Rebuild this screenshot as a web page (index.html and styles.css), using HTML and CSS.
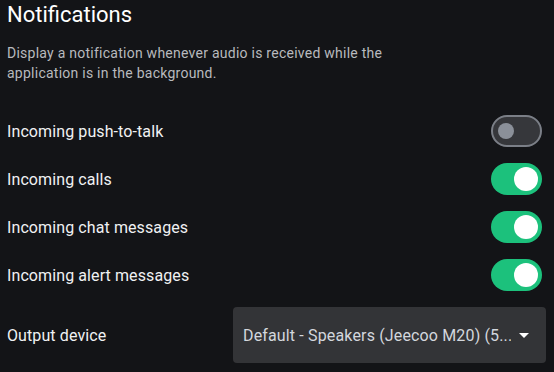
FILE: index.html
```html
<!DOCTYPE html>
<html>
<head>
<meta charset="utf-8">
<link rel="stylesheet" href="styles.css">
</head>
<body>
<div class="page">
  <h1 class="title">Notifications</h1>
  <p class="desc">Display a notification whenever audio is received while the application is in the background.</p>
  <div class="rows">
    <div class="row">
      <span class="label">Incoming push-to-talk</span>
      <span class="switch off"><span class="knob"></span></span>
    </div>
    <div class="row">
      <span class="label">Incoming calls</span>
      <span class="switch on"><span class="knob"></span></span>
    </div>
    <div class="row">
      <span class="label">Incoming chat messages</span>
      <span class="switch on"><span class="knob"></span></span>
    </div>
    <div class="row">
      <span class="label">Incoming alert messages</span>
      <span class="switch on"><span class="knob"></span></span>
    </div>
    <div class="row select-row">
      <span class="label">Output device</span>
      <div class="select">
        <span class="select-text">Default - Speakers (Jeecoo M20) (5...</span>
        <svg class="caret" width="10" height="5" viewBox="0 0 10 5"><path d="M0 0 L10 0 L5 5 Z" fill="#ffffff"/></svg>
      </div>
    </div>
  </div>
</div>
</body>
</html>
```

FILE: styles.css
```css
html, body {
  margin: 0;
  padding: 0;
  background: #131417;
  width: 554px;
  height: 372px;
  overflow: hidden;
}
.page {
  padding: 0 8px 0 7px;
  font-family: Roboto, "Liberation Sans", sans-serif;
  color: #f2f3f5;
}
.title {
  margin: 0;
  font-size: 22px;
  font-weight: 400;
  line-height: 30px;
  color: #ffffff;
}
.desc {
  margin: 13px 0 0 0;
  width: 400px;
  font-size: 14px;
  letter-spacing: 0.25px;
  line-height: 20px;
  color: #b8babe;
}
.rows {
  margin-top: 24px;
  display: flex;
  flex-direction: column;
}
.row {
  height: 48px;
  display: flex;
  align-items: center;
  justify-content: space-between;
}
.label {
  font-size: 16px;
  letter-spacing: 0.1px;
  color: #f0f1f3;
}
.switch {
  box-sizing: border-box;
  width: 51px;
  height: 32px;
  border-radius: 16px;
  margin-right: 4px;
  display: flex;
  align-items: center;
}
.switch.off {
  background: #36373b;
  border: 2px solid #7b7f87;
  padding-left: 5px;
}
.switch.off .knob {
  width: 16px;
  height: 16px;
  border-radius: 50%;
  background: #8b9099;
}
.switch.on {
  background: #1cc17c;
  justify-content: flex-end;
  padding-right: 4px;
}
.switch.on .knob {
  width: 24px;
  height: 24px;
  border-radius: 50%;
  background: #ffffff;
}
.select-row {
  height: auto;
  margin-top: 8px;
}
.select {
  box-sizing: border-box;
  width: 313px;
  height: 56px;
  background: #333437;
  border-radius: 4px;
  display: flex;
  align-items: center;
  padding: 0 17px 0 10px;
}
.select-text {
  flex: 1;
  font-size: 16px;
  letter-spacing: 0.15px;
  color: #d3d7dd;
  white-space: nowrap;
  overflow: hidden;
}
.caret {
  display: block;
  margin-left: 8px;
}
```
